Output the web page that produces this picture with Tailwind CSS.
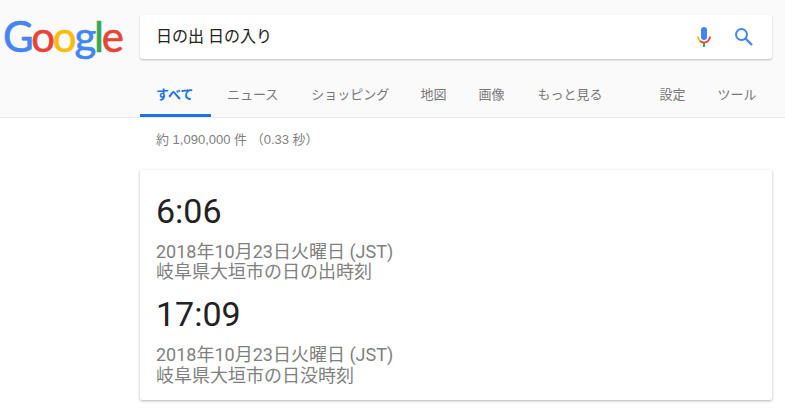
<!DOCTYPE html>
<html lang="ja">
<head>
  <meta charset="UTF-8" />
  <title>日の出 日の入り - Google 検索</title>
  <script src="https://cdn.jsdelivr.net/npm/@tailwindcss/browser@4"></script>
</head>
<body class="h-[418px] overflow-hidden bg-white font-['Roboto','Noto_Sans_CJK_JP',sans-serif]">

  <!-- header -->
  <div class="h-[118px] bg-[#fafafa] border-b border-[#ebebeb]">
    <div class="flex items-start pt-[15px]">
      <div class="w-[140px] pl-[3px] h-[44px] leading-[42px] text-[42px] tracking-[-2.2px] font-['Lato',sans-serif] font-normal [-webkit-text-stroke:0.6px]">
        <span class="text-[#4285f4]">G</span><span class="text-[#ea4335]">o</span><span class="text-[#fbbc05]">o</span><span class="text-[#4285f4]">g</span><span class="text-[#34a853]">l</span><span class="text-[#ea4335]">e</span>
      </div>
      <div class="w-[632px] h-[44px] bg-white rounded-[2px] shadow-[0_1px_2px_rgba(0,0,0,0.25)] flex items-center pl-[16px] pr-[18px]">
        <span class="flex-1 text-[16px] text-[#222]">日の出 日の入り</span>
        <svg class="w-[16px] h-[24px] mr-[22px]" viewBox="0 0 16 24">
          <rect x="5" y="2" width="6" height="13" rx="3" fill="#4285f4"/>
          <path d="M2 11.5a6 6 0 0 0 2 4.4" fill="none" stroke="#fbbc05" stroke-width="2"/>
          <path d="M4 15.9a6 6 0 0 0 8 0" fill="none" stroke="#ea4335" stroke-width="2"/>
          <path d="M12 15.9a6 6 0 0 0 2-4.4" fill="none" stroke="#ea4335" stroke-width="2"/>
          <rect x="7" y="18" width="2" height="4" fill="#34a853"/>
        </svg>
        <svg class="w-[20px] h-[20px]" viewBox="0 0 20 20">
          <circle cx="7.5" cy="7.5" r="5.5" fill="none" stroke="#4285f4" stroke-width="2"/>
          <path d="M11.5 11.5L18 18" stroke="#4285f4" stroke-width="2.4"/>
        </svg>
      </div>
    </div>
    <div class="flex h-[43px] mt-[15px] pl-[140px] text-[13px] text-[#777]">
      <div class="w-[71px] h-[43px] pt-[11px] pl-[16px] border-b-[3px] border-[#1a73e8] text-[#1a73e8] font-bold">すべて</div>
      <div class="ml-[16px] pt-[11px]">ニュース</div>
      <div class="ml-[33px] pt-[11px]">ショッピング</div>
      <div class="ml-[31px] pt-[11px]">地図</div>
      <div class="ml-[32px] pt-[11px]">画像</div>
      <div class="ml-[33px] pt-[11px]">もっと見る</div>
      <div class="ml-[57px] pt-[11px]">設定</div>
      <div class="ml-[32px] pt-[11px]">ツール</div>
    </div>
  </div>

  <!-- result count -->
  <div class="pl-[156px] pt-[14px] text-[13px] leading-[16px] text-[#808080] font-['Liberation_Sans','Noto_Sans_CJK_JP',sans-serif]">約 1,090,000 件 （0.33 秒）</div>

  <!-- sunrise / sunset card -->
  <div class="ml-[140px] mt-[22px] w-[632px] h-[230px] bg-white rounded-[2px] shadow-[0_1px_3px_rgba(0,0,0,0.3)] pl-[16px] pt-[20px]">
    <div class="text-[34px] leading-[42px] text-[#222]">6:06</div>
    <div class="mt-[10px] text-[18px] leading-[20px] text-[#808080]">
      <div>2018年10月23日火曜日 (JST)</div>
      <div>岐阜県大垣市の日の出時刻</div>
    </div>
    <div class="mt-[11px] text-[34px] leading-[42px] text-[#222]">17:09</div>
    <div class="mt-[9px] text-[18px] leading-[21px] text-[#808080]">
      <div>2018年10月23日火曜日 (JST)</div>
      <div>岐阜県大垣市の日没時刻</div>
    </div>
  </div>

</body>
</html>
